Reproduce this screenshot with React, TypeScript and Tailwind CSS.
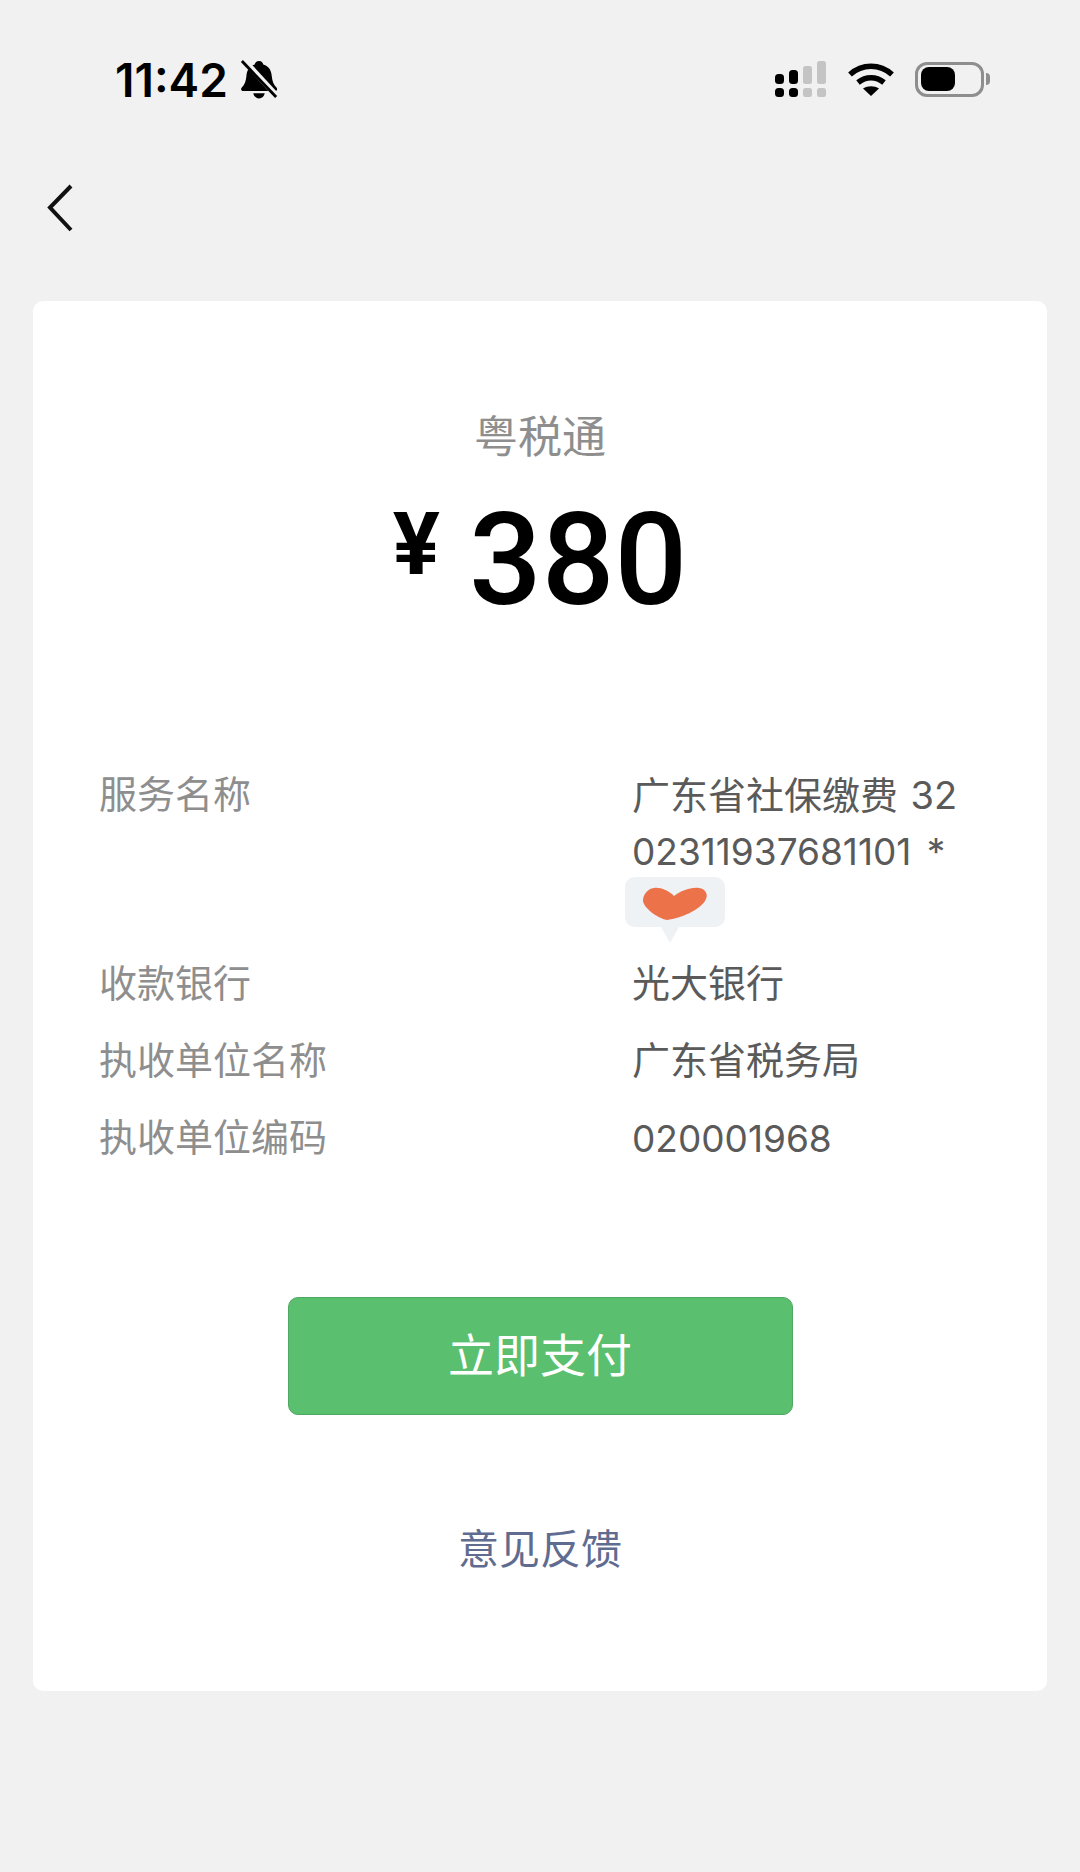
const cjk = "font-['Liberation_Sans','Noto_Sans_CJK_SC',sans-serif]"

function Bell() {
  return (
    <svg width="38" height="42" viewBox="0 0 40 42" className="ml-[12px]">
      <path d="M20 1c2.600 0 4.200 1.700 4.500 3.700 6 1.500 8.500 6.500 9 12.500.5 5 1.800 8.500 4.900 11.800 1.400 1.500.6 3.700-1.500 3.700H3.600c-2.300 0-3.200-2.200-1.700-3.700 3-3.200 4.300-6.800 4.800-11.800C7.200 11.200 9.500 6.200 15.500 4.700 15.800 2.700 17.400 1 20 1z" fill="#000" />
      <path d="M14 35h12c-.5 3-3 5.500-6 5.500s-5.500-2.500-6-5.500z" fill="#000" />
      <path d="M4 0l34 37" stroke="#f1f1f1" strokeWidth="6" />
      <path d="M2 1l36 38" stroke="#000" strokeWidth="3" />
    </svg>
  )
}

function Signal() {
  return (
    <svg width="56" height="38" viewBox="0 0 56 38">
      <rect x="1" y="14" width="9" height="10" rx="3.500" fill="#000" />
      <rect x="15" y="10" width="9" height="14" rx="3.500" fill="#000" />
      <rect x="29" y="6" width="9" height="18" rx="2.500" fill="#c4c4c4" />
      <rect x="43" y="1" width="9" height="23" rx="2.500" fill="#c4c4c4" />
      <rect x="1" y="28" width="9" height="9" rx="3.500" fill="#000" />
      <rect x="15" y="28" width="9" height="9" rx="3.500" fill="#000" />
      <rect x="29" y="28" width="9" height="9" rx="2.500" fill="#c4c4c4" />
      <rect x="43" y="28" width="9" height="9" rx="2.500" fill="#c4c4c4" />
    </svg>
  )
}

function Wifi() {
  return (
    <svg width="48" height="36" viewBox="0 0 48 36" fill="none" stroke="#000" strokeWidth="5.500">
      <path d="M3 13.500c12-11 30-11 42 0" />
      <path d="M11 21.500c8-6.500 18-6.500 26 0" />
      <path d="M24 35l-8-7.500c5-3 11-3 16 0z" fill="#000" stroke="none" />
    </svg>
  )
}

function Battery() {
  return (
    <div className="flex items-center ml-[20px]">
      <div className="w-[69px] h-[35px] rounded-[12px] border-[3px] border-[#8e8e8e] p-[2.500px]">
        <div className="w-[34px] h-full rounded-[8px] bg-black" />
      </div>
      <div className="w-[4px] h-[12px] ml-[2px] rounded-r-full bg-[#8e8e8e]" />
    </div>
  )
}

function Row({ label, children }: { label: string; children: React.ReactNode }) {
  return (
    <div className="flex h-[77px] items-start text-[38px] leading-[55px]">
      <div className="w-[533px] text-[#8e8e8e]">{label}</div>
      <div className="text-[#5a5a5a]">{children}</div>
    </div>
  )
}

export default function App() {
  return (
    <div className={`${cjk} w-[1080px] h-[1872px] bg-[#f1f1f1] overflow-hidden`}>
      <div className="flex h-[160px] pt-[58px] items-start justify-between pl-[115px] pr-[90px]">
        <div className="flex items-center h-[44px]">
          <span className="font-['Inter'] text-[46px] font-semibold leading-none text-black">11:42</span>
          <Bell />
        </div>
        <div className="flex items-center pt-[2px]">
          <Signal />
          <div className="ml-[17px]"><Wifi /></div>
          <Battery />
        </div>
      </div>

      <div className="h-[141px] pl-[47px] pt-[24px]">
        <svg width="26" height="48" viewBox="0 0 26 48" fill="none" stroke="#111" strokeWidth="4">
          <path d="M24 2L3 23.500 24 46" />
        </svg>
      </div>

      <div className="mx-[33px] h-[1390px] rounded-[10px] bg-white pt-[112px]">
        <div className="text-center text-[44px] leading-[50px] text-[#8e8e8e]">粤税通</div>
        <div className="flex justify-center items-start h-[150px] mt-[22px] font-['Roboto'] font-medium text-black">
          <span className="text-[88px] leading-[104px] font-bold pt-[7px]">¥</span>
          <span className="text-[128px] leading-[150px] ml-[29px]">380</span>
        </div>

        <div className="mt-[133px] pl-[66px]">
          <div className="flex text-[38px] leading-[55px] h-[189px]">
            <div className="w-[533px] shrink-0 text-[#8e8e8e]">服务名称</div>
            <div className="text-[#5a5a5a]">
              <div>广东省社保缴费 <span className="font-['Inter'] text-[38px] ml-[2px]">32</span></div>
              <div className="font-['Inter'] text-[37px]">02311937681101 <span className="ml-[5px]">*</span></div>
              <svg width="102" height="68" viewBox="0 0 102 68" className="block -ml-[8px] mt-[-3px]">
                <path d="M12 1h78c7 0 11 4 11 11v28c0 7-4 11-11 11H55L46 67 37 51H12C5 51 1 47 1 40V12C1 5 5 1 12 1z" fill="#eef2f5" />
                <path d="M50 20C44 14 36 11 30 12 23 13 19 19 19 25 20 32 33 42 43 44 58 42 75 34 81 25 85 19 82 13 75 12 66 11 57 15 50 20z" fill="#ec7249" />
              </svg>
            </div>
          </div>
          <Row label="收款银行">光大银行</Row>
          <Row label="执收单位名称">广东省税务局</Row>
          <Row label="执收单位编码"><span className="font-['Inter'] text-[37px]">020001968</span></Row>
        </div>

        <div className="mt-[109px] mx-auto w-[505px] h-[118px] rounded-[10px] bg-[#5abf6e] border border-[#4fa862] flex items-center justify-center text-[46px] text-white">
          立即支付
        </div>
        <div className="mt-[110px] text-center text-[41px] leading-[50px] text-[#5f6c90]">意见反馈</div>
      </div>
    </div>
  )
}
